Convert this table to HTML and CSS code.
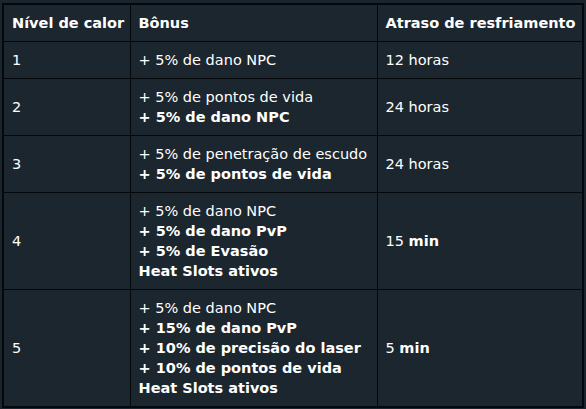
FILE: index.html
```html
<!DOCTYPE html>
<html lang="pt">
<head>
<meta charset="utf-8">
<link rel="stylesheet" href="styles.css">
</head>
<body>
<table class="heat">
  <colgroup>
    <col class="c1">
    <col class="c2">
    <col class="c3">
  </colgroup>
  <thead>
    <tr>
      <th>Nível de calor</th>
      <th>Bônus</th>
      <th>Atraso de resfriamento</th>
    </tr>
  </thead>
  <tbody>
    <tr>
      <td>1</td>
      <td>+ 5% de dano NPC</td>
      <td>12 horas</td>
    </tr>
    <tr>
      <td>2</td>
      <td>+ 5% de pontos de vida<br><b>+ 5% de dano NPC</b></td>
      <td>24 horas</td>
    </tr>
    <tr>
      <td>3</td>
      <td>+ 5% de penetração de escudo<br><b>+ 5% de pontos de vida</b></td>
      <td>24 horas</td>
    </tr>
    <tr>
      <td>4</td>
      <td>+ 5% de dano NPC<br><b>+ 5% de dano PvP</b><br><b>+ 5% de Evasão</b><br><b>Heat Slots ativos</b></td>
      <td>15 <b>min</b></td>
    </tr>
    <tr>
      <td>5</td>
      <td>+ 5% de dano NPC<br><b>+ 15% de dano PvP</b><br><b>+ 10% de precisão do laser</b><br><b>+ 10% de pontos de vida</b><br><b>Heat Slots ativos</b></td>
      <td>5 <b>min</b></td>
    </tr>
  </tbody>
</table>
</body>
</html>
```

FILE: styles.css
```css
html, body {
  margin: 0;
  padding: 0;
  background: #1b252d;
}
body {
  padding: 3px 0 0 2px;
  font-family: "DejaVu Sans", sans-serif;
  font-size: 14.5px;
  color: #ffffff;
}
.heat {
  border-collapse: collapse;
  table-layout: fixed;
  border: 2px solid #05080a;
  width: 582px;
  background: #1c262e;
}
.c1 { width: 127px; }
.c2 { width: 247px; }
.heat th,
.heat td {
  border: 1px solid #05080a;
  padding: 8px 8px;
  line-height: 20px;
  text-align: left;
  vertical-align: middle;
  white-space: nowrap;
}
.heat th,
.heat b {
  font-weight: bold;
}
```
